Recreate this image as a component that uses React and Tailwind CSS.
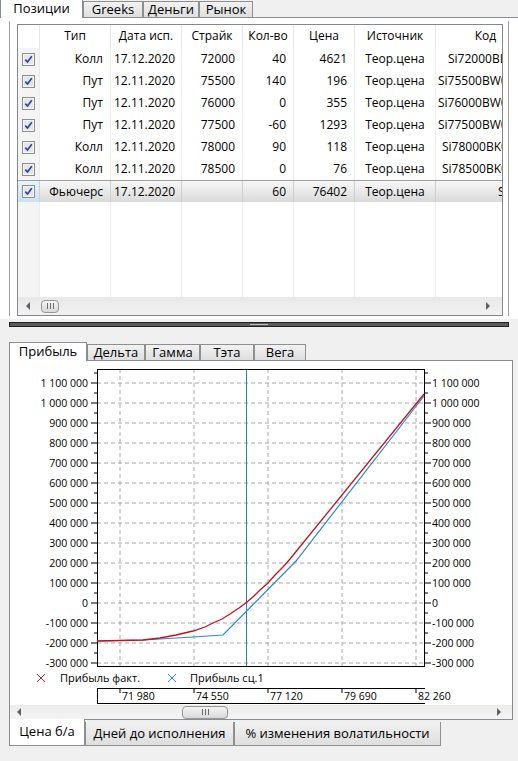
import React from "react";

const rows = [
  { type: "Колл", date: "17.12.2020", strike: "72000", qty: "40", price: "4621", src: "Теор.цена", code: "Si72000BL0", pad: "pl-3" },
  { type: "Пут", date: "12.11.2020", strike: "75500", qty: "140", price: "196", src: "Теор.цена", code: "Si75500BW0B", pad: "pl-0.5" },
  { type: "Пут", date: "12.11.2020", strike: "76000", qty: "0", price: "355", src: "Теор.цена", code: "Si76000BW0B", pad: "pl-0.5" },
  { type: "Пут", date: "12.11.2020", strike: "77500", qty: "-60", price: "1293", src: "Теор.цена", code: "Si77500BW0B", pad: "pl-0.5" },
  { type: "Колл", date: "12.11.2020", strike: "78000", qty: "90", price: "118", src: "Теор.цена", code: "Si78000BK0B", pad: "pl-1.5" },
  { type: "Колл", date: "12.11.2020", strike: "78500", qty: "0", price: "76", src: "Теор.цена", code: "Si78500BK0B", pad: "pl-1.5" },
];

const cols = "grid grid-cols-[22px_71px_71px_61px_51px_61px_81px_100px]";

const Check = () => (
  <svg width="13" height="13" viewBox="0 0 13 13">
    <rect x="0.5" y="0.5" width="12" height="12" fill="#f4f4f4" stroke="#8e8f8f" />
    <rect x="2" y="2" width="9" height="9" fill="#e4e6ea" />
    <path d="M3.3 6.6 L5.5 9 L9.8 3.3" fill="none" stroke="#21439c" strokeWidth="1.6" />
  </svg>
);

const Thumb = ({ w }) => (
  <div className={`${w} h-[13px] border border-[#979797] rounded-sm bg-gradient-to-b from-[#f4f4f4] to-[#d9d9d9] flex items-center justify-center gap-[2px]`}>
    <div className="w-px h-[6px] bg-[#6b6b6b]" />
    <div className="w-px h-[6px] bg-[#6b6b6b]" />
    <div className="w-px h-[6px] bg-[#6b6b6b]" />
  </div>
);

const ArrowL = () => (
  <svg width="5" height="8" viewBox="0 0 5 8"><polygon points="4,0 0,4 4,8" fill="#606060" /></svg>
);
const ArrowR = () => (
  <svg width="5" height="8" viewBox="0 0 5 8"><polygon points="0,0 4,4 0,8" fill="#606060" /></svg>
);

const Tab = ({ label, active, w }) =>
  active ? (
    <div className={`${w} h-[19px] bg-white border border-b-0 border-[#898c95] flex items-center justify-center text-[13px] -mb-px relative z-10`}>
      {label}
    </div>
  ) : (
    <div className={`${w} h-[16px] bg-gradient-to-b from-[#f2f2f2] to-[#dedede] border border-b-0 border-[#8e8f8f] flex items-center justify-center text-[13px]`}>
      {label}
    </div>
  );

const yVals = [
  "1 100 000", "1 000 000", "900 000", "800 000", "700 000", "600 000", "500 000",
  "400 000", "300 000", "200 000", "100 000", "0", "-100 000", "-200 000", "-300 000",
];
const xTicks = [
  [120, "71 980"], [194, "74 550"], [268, "77 120"], [342, "79 690"], [416, "82 260"],
];

const red = "97,640 143,639 160,637 176,634 193,630 205,626 213,622 222,618 230,613 239,607 247,601 254,595 260,589 268,582 275,574 283,566 290,558 424,393";
const blue = "97,640 143,639 193,636 223,634 296,560 424,395";

const Chart = () => (
  <svg width="503" height="343" className="block">
    <g transform="translate(-10,-360)" fontFamily="'Open Sans', sans-serif" fontSize="10.5" fill="#000">
      {yVals.map((v, i) => {
        const y = 382 + i * 20;
        return (
          <g key={v}>
            <line x1="97" x2="425" y1={y} y2={y} stroke="#a8a8a8" strokeDasharray="4 3" />
            <line x1="91" x2="97" y1={y} y2={y} stroke="#000" />
            <line x1="425" x2="431" y1={y} y2={y} stroke="#000" />
            <text x="88" y={y + 4} textAnchor="end">{v}</text>
            <text x="432" y={y + 4}>{v}</text>
          </g>
        );
      })}
      {Array.from({ length: 15 }).map((_, i) => {
        const y = 372 + i * 20;
        return (
          <g key={i}>
            <line x1="94" x2="97" y1={y} y2={y} stroke="#000" />
            <line x1="425" x2="428" y1={y} y2={y} stroke="#000" />
          </g>
        );
      })}
      {xTicks.map(([x, l]) => (
        <g key={l}>
          <line x1={x} x2={x} y1="368" y2="665" stroke="#a8a8a8" strokeDasharray="4 3" />
          <line x1={x} x2={x} y1="687" y2="692" stroke="#000" />
          <text x={x + 2} y="699">{l}</text>
        </g>
      ))}
      <rect x="97.5" y="368.5" width="327" height="297" fill="none" stroke="#000" />
      <line x1="246.5" x2="246.5" y1="369" y2="665" stroke="#2b7fc9" />
      <polyline points={blue} fill="none" stroke="#2b86d2" strokeWidth="1.2" />
      <polyline points={red} fill="none" stroke="#c0141c" strokeWidth="1.3" />
      <line x1="97" x2="425" y1="687.5" y2="687.5" stroke="#000" />
      <line x1="97" x2="425" y1="702.5" y2="702.5" stroke="#000" />
      <line x1="97.5" x2="97.5" y1="687" y2="703" stroke="#000" />
      <path d="M37 673 L45 681 M45 673 L37 681" stroke="#d0202a" strokeWidth="1" />
      <text x="60" y="681" fontSize="11">Прибыль факт.</text>
      <path d="M168 673 L176 681 M176 673 L168 681" stroke="#2b86d2" strokeWidth="1" />
      <text x="190" y="681" fontSize="11">Прибыль сц.1</text>
    </g>
  </svg>
);

export default function App() {
  return (
    <div className="w-[518px] h-[761px] bg-[#f0f0f0] overflow-hidden text-black font-['Open_Sans',sans-serif]">
      <div className="flex items-end h-[17px]">
        <Tab label="Позиции" active w="w-[83px]" />
        <Tab label="Greeks" w="w-[60px]" />
        <Tab label="Деньги" w="w-[56px]" />
        <Tab label="Рынок" w="w-[54px]" />
      </div>
      <div className="h-[302px] bg-white border-t border-[#898c95] pt-[3px] px-[9px]">
        <div className="h-[295px] border-x border-[#a0a0a0] pl-[7px] pr-[5px] pt-[3px]">
          <div className="h-[292px] border border-[#828790] flex flex-col overflow-hidden bg-white text-[12px]">
            <div className={`${cols} h-[23px] shrink-0`}>
              <div className="border-r border-[#e5e5e5]" />
              {["Тип", "Дата исп.", "Страйк", "Кол-во", "Цена", "Источник", "Код"].map((h) => (
                <div key={h} className="border-r border-[#e5e5e5] flex items-center justify-center pb-[2px]">{h}</div>
              ))}
            </div>
            {rows.map((r, i) => (
              <div key={i} className={`${cols} h-[22px] shrink-0`}>
                <div className="bg-[#f4f4f4] border-r border-[#ececec] flex items-center justify-center"><Check /></div>
                <div className="border-r border-[#ececec] flex items-center justify-end pr-[7px]">{r.type}</div>
                <div className="border-r border-[#ececec] flex items-center pl-[3px]">{r.date}</div>
                <div className="border-r border-[#ececec] flex items-center justify-end pr-[7px]">{r.strike}</div>
                <div className="border-r border-[#ececec] flex items-center justify-end pr-[7px]">{r.qty}</div>
                <div className="border-r border-[#ececec] flex items-center justify-end pr-[7px]">{r.price}</div>
                <div className="border-r border-[#ececec] flex items-center justify-center">{r.src}</div>
                <div className={`flex items-center whitespace-nowrap ${r.pad}`}>{r.code}</div>
              </div>
            ))}
            <div className={`${cols} h-[22px] shrink-0 border-t border-[#a0a0a0] bg-gradient-to-b from-[#f7f7f7] to-[#dadada]`}>
              <div className="bg-gradient-to-b from-[#e9f4fc] to-[#c8e3f6] border-r border-[#d0d0d0] flex items-center justify-center"><Check /></div>
              <div className="border-r border-[#d0d0d0] flex items-center justify-end pr-[7px]">Фьючерс</div>
              <div className="border-r border-[#d0d0d0] flex items-center pl-[3px]">17.12.2020</div>
              <div className="border-r border-[#d0d0d0]" />
              <div className="border-r border-[#d0d0d0] flex items-center justify-end pr-[7px]">60</div>
              <div className="border-r border-[#d0d0d0] flex items-center justify-end pr-[7px]">76402</div>
              <div className="border-r border-[#d0d0d0] flex items-center justify-center">Теор.цена</div>
              <div className="flex items-center whitespace-nowrap pl-[62px]">SiZ0</div>
            </div>
            <div className={`${cols} flex-1`}>
              <div className="bg-[#f4f4f4] border-r border-[#ececec]" />
              <div className="border-r border-[#ececec]" />
              <div className="border-r border-[#ececec]" />
              <div className="border-r border-[#ececec]" />
              <div className="border-r border-[#ececec]" />
              <div className="border-r border-[#ececec]" />
              <div className="border-r border-[#ececec]" />
              <div />
            </div>
            <div className="h-[18px] shrink-0 bg-gradient-to-b from-[#e8e8e8] to-[#f2f2f2] flex items-center pl-[8px] pr-[11px]">
              <ArrowL />
              <div className="ml-[10px]"><Thumb w="w-[18px]" /></div>
              <div className="flex-1" />
              <ArrowR />
            </div>
          </div>
        </div>
      </div>
      <div className="mx-[9px] mt-[3px] h-[5px] border border-[#222] bg-[#5a5a5a] flex flex-col items-center justify-center gap-px">
        <div className="w-[18px] h-px bg-[#bdbdbd]" />
      </div>
      <div className="flex items-end h-[24px] mt-[9px] pl-[9px]">
        <Tab label="Прибыль" active w="w-[78px]" />
        <Tab label="Дельта" w="w-[58px]" />
        <Tab label="Гамма" w="w-[55px]" />
        <Tab label="Тэта" w="w-[54px]" />
        <Tab label="Вега" w="w-[52px]" />
      </div>
      <div className="mx-[9px] mr-[5px] h-[360px] bg-white border border-[#898c95] flex flex-col">
        <Chart />
        <div className="h-[14px] mt-auto bg-gradient-to-b from-[#ececec] to-[#f4f4f4] flex items-center pl-[7px] pr-[10px]">
          <ArrowL />
          <div className="ml-[160px]"><Thumb w="w-[46px]" /></div>
          <div className="flex-1" />
          <ArrowR />
        </div>
      </div>
      <div className="flex items-start h-[28px] pl-[9px]">
        <div className="w-[76px] h-[27px] bg-white border border-t-0 border-[#898c95] flex items-center justify-center text-[13px] -mt-px relative z-10">Цена б/а</div>
        <div className="w-[149px] h-[24px] bg-gradient-to-b from-[#f2f2f2] to-[#dedede] border border-t-0 border-[#8e8f8f] flex items-center justify-center text-[13px] mt-[2px]">Дней до исполнения</div>
        <div className="w-[207px] h-[24px] bg-gradient-to-b from-[#f2f2f2] to-[#dedede] border border-t-0 border-[#8e8f8f] flex items-center justify-center text-[13px] mt-[2px]">% изменения волатильности</div>
      </div>
    </div>
  );
}
